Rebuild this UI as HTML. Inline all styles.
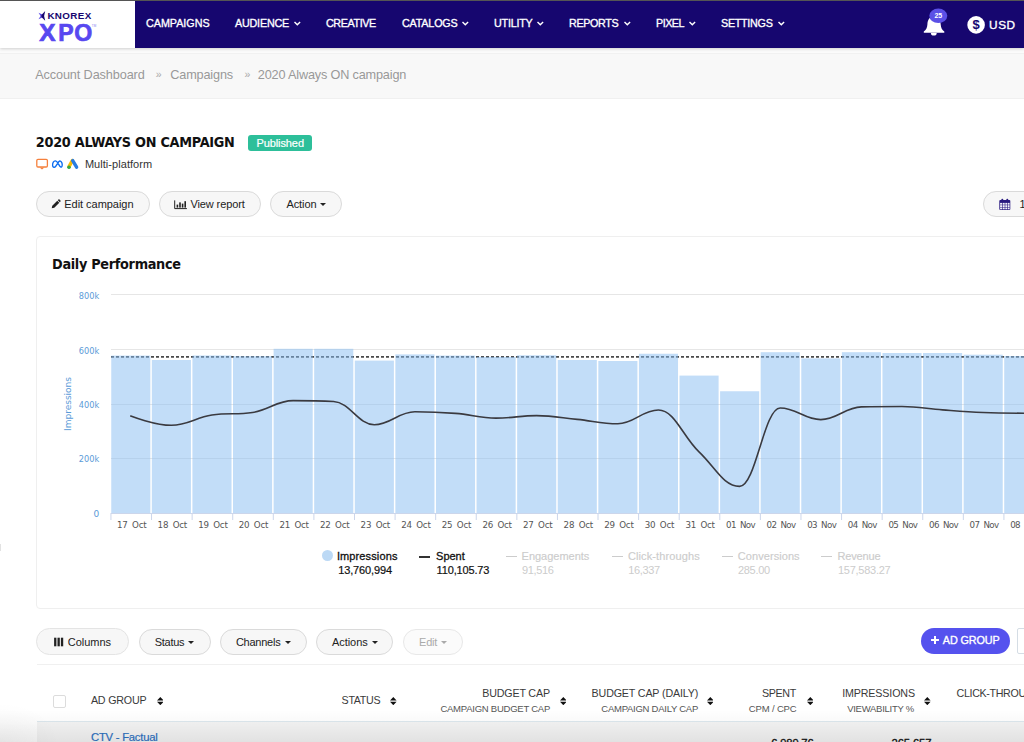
<!DOCTYPE html>
<html><head><meta charset="utf-8"><title>2020 Always ON campaign</title>
<style>
*{box-sizing:border-box;margin:0;padding:0}
html,body{width:1024px;height:742px;overflow:hidden;background:#fff;font-family:"Liberation Sans",sans-serif;color:#222}
.abs{position:absolute}
.t{position:absolute;white-space:pre}
#topline{left:0;top:0;width:1024px;height:1px;background:#555}
#nav{left:0;top:1px;width:1024px;height:46.5px;background:#16066f;box-shadow:0 1px 3px rgba(0,0,0,0.18)}
#logo{left:0;top:0;width:135px;height:46.5px;background:#fff}
#crumb{left:0;top:47.5px;width:1024px;height:51.5px;background:#f8f8f8;border-bottom:1px solid #f0f0f0}
.btn{position:absolute;border:1px solid #dadada;border-radius:14px;background:#f7f7f7}
.caret{position:absolute;width:0;height:0;border-left:3px solid transparent;border-right:3px solid transparent;border-top:3.2px solid #222}
.yl{font-family:"DejaVu Sans",sans-serif;font-size:9px;fill:#5b9bd8}
.xl{font-family:"DejaVu Sans",sans-serif;font-size:8.7px;fill:#555}
.lgl{position:absolute;height:2px;width:11.2px;background:#333;top:555.6px}
.lgl.off{background:#ccc;height:1.6px;top:555.8px}
.sort{position:absolute;width:6.6px;height:8.2px}
</style></head><body>

<!-- BREADCRUMB BG -->
<div class="abs" id="crumb"></div>
<div class="abs" style="left:0;top:47.5px;width:1024px;height:6.5px;background:#fbfbfb;border-bottom:1px solid #f1f1f1"></div>

<!-- NAV -->
<div class="abs" id="nav">
 <div class="abs" id="logo">
  <svg class="abs" style="left:36px;top:8px" width="64" height="36" viewBox="36 9 64 36">
   <path d="M38.5 12.7 L42.3 14.6 L41.2 16 L42.3 17.4 L38.5 19.3 L40.6 16 Z" fill="#5b4be8"/>
   <path d="M45.2 11.1 L41.9 14.4 L40.9 16 L41.9 17.6 L45.2 20.8 L44.1 16 Z" fill="#16066f"/>
   <text x="47.4" y="19.3" font-family="Liberation Sans, sans-serif" font-weight="bold" font-size="9.8" textLength="43.9" lengthAdjust="spacing" fill="#16066f">KNOREX</text>
   <g font-family="Liberation Sans, sans-serif" font-weight="bold" font-size="23.2" fill="#5848f0" stroke="#5848f0" stroke-width="0.7"><text x="39.2" y="41.1" textLength="16.3" lengthAdjust="spacingAndGlyphs">X</text><text x="58.2" y="41.1" textLength="15.4" lengthAdjust="spacingAndGlyphs">P</text><text x="74.2" y="41.1" textLength="18" lengthAdjust="spacingAndGlyphs">O</text></g>
   <text x="91.8" y="26.6" font-family="Liberation Sans, sans-serif" font-size="3" fill="#8a7ff0">TM</text>
  </svg>
 </div>
 
<svg class="abs" style="left:293.9px;top:19.8px" width="8" height="6" viewBox="0 0 8 6"><path d="M0.5 0.9 L3.3 3.8 L6.1 0.9" fill="none" stroke="#fff" stroke-width="1.4"/></svg>
<svg class="abs" style="left:462.1px;top:19.8px" width="8" height="6" viewBox="0 0 8 6"><path d="M0.5 0.9 L3.3 3.8 L6.1 0.9" fill="none" stroke="#fff" stroke-width="1.4"/></svg>
<svg class="abs" style="left:537.3px;top:19.8px" width="8" height="6" viewBox="0 0 8 6"><path d="M0.5 0.9 L3.3 3.8 L6.1 0.9" fill="none" stroke="#fff" stroke-width="1.4"/></svg>
<svg class="abs" style="left:623.6px;top:19.8px" width="8" height="6" viewBox="0 0 8 6"><path d="M0.5 0.9 L3.3 3.8 L6.1 0.9" fill="none" stroke="#fff" stroke-width="1.4"/></svg>
<svg class="abs" style="left:689.0px;top:19.8px" width="8" height="6" viewBox="0 0 8 6"><path d="M0.5 0.9 L3.3 3.8 L6.1 0.9" fill="none" stroke="#fff" stroke-width="1.4"/></svg>
<svg class="abs" style="left:777.9px;top:19.8px" width="8" height="6" viewBox="0 0 8 6"><path d="M0.5 0.9 L3.3 3.8 L6.1 0.9" fill="none" stroke="#fff" stroke-width="1.4"/></svg>
 <svg class="abs" style="left:920px;top:5px" width="32" height="34" viewBox="0 0 32 34">
  <path d="M14 10.5 C9.5 10.5 7.6 14 7.4 18.5 C7.2 22 6 23.8 3.8 25.4 L3.8 26.8 L24.3 26.8 L24.3 25.4 C22.1 23.8 20.9 22 20.7 18.5 C20.5 14 18.5 10.5 14 10.5 Z" fill="#fff"/>
  <path d="M10.9 27 A2.9 2.6 0 0 0 16.7 27 Z" fill="#fff"/>
  <ellipse cx="18.3" cy="9.8" rx="9" ry="7.3" fill="#5b50e6"/>
  <text x="18.3" y="12.3" text-anchor="middle" font-family="Liberation Sans, sans-serif" font-weight="bold" font-size="7" fill="#fff">25</text>
 </svg>
 <svg class="abs" style="left:966px;top:14px" width="20" height="20" viewBox="0 0 20 20">
  <circle cx="10.1" cy="9.9" r="8.8" fill="#fff"/>
  <text x="10.1" y="14.2" text-anchor="middle" font-family="Liberation Sans, sans-serif" font-weight="bold" font-size="13" fill="#16066f">$</text>
 </svg>
</div>
<div class="abs" id="topline"></div>

<!-- TITLE ROW -->
<div class="abs" id="pub" style="left:248.1px;top:135px;width:63.7px;height:15.6px;border-radius:3px;background:#2dbf9a"></div>
<svg class="abs" style="left:34px;top:156px" width="48" height="16" viewBox="34 156 48 16">
 <!-- display -->
 <rect x="36.8" y="159.4" width="10.6" height="7.6" rx="1.2" fill="none" stroke="#f5803c" stroke-width="1.3"/>
 <path d="M39.6 167.4 L44.4 167.4 L42 169.4 Z" fill="#f5803c"/>
 <!-- meta -->
 <path d="M52.6 165.6 C52.4 162.8 53.8 160.9 55.2 160.9 C57 160.9 58.2 163.6 59.4 165.6 C60.3 167.1 61 167.3 61.6 166.9 C62.5 166.2 62.4 163.6 61.5 162.2 C60.8 161 59.8 160.7 59 161.5 C57.8 162.7 56.6 165.3 55.6 166.5 C54.6 167.7 52.8 167.6 52.6 165.6 Z" fill="none" stroke="#0a6cf0" stroke-width="1.35" stroke-linejoin="round"/>
 <!-- google ads -->
 <path d="M72.3 160.6 L68.9 166.9" stroke="#fbbc04" stroke-width="3.4" stroke-linecap="round"/>
 <path d="M72.7 160.6 L76.6 167.2" stroke="#2a7de1" stroke-width="3.4" stroke-linecap="round"/>
 <circle cx="69" cy="167.2" r="1.8" fill="#2fa84f"/>
</svg>

<!-- BUTTONS ROW 1 -->
<div class="btn" style="left:36.2px;top:191px;width:113.4px;height:25.8px"></div>
<div class="btn" style="left:159.2px;top:191px;width:101.6px;height:25.8px"></div>
<div class="btn" style="left:270.2px;top:191px;width:72px;height:25.8px"></div>
<i class="caret" style="left:320.2px;top:203.2px"></i>
<div class="btn" style="left:983.2px;top:191px;width:80px;height:25.8px"></div>
<!-- pencil -->
<svg class="abs" style="left:51.2px;top:199.4px" width="10" height="10" viewBox="0 0 11 11">
 <path d="M0.8 10.2 L1.4 7.4 L6.9 1.9 L9.1 4.1 L3.6 9.6 Z M7.5 1.3 L8.2 0.6 C8.5 0.3 9 0.3 9.3 0.6 L10.4 1.7 C10.7 2 10.7 2.5 10.4 2.8 L9.7 3.5 Z" fill="#222"/>
</svg>
<!-- bar chart -->
<svg class="abs" style="left:174px;top:200px" width="14" height="10" viewBox="0 0 14 10">
 <path d="M0.7 0.4 V8.6 H12.9" fill="none" stroke="#222" stroke-width="1"/>
 <rect x="2.6" y="4.6" width="1.6" height="3" fill="#222"/>
 <rect x="5.2" y="2.4" width="1.6" height="5.2" fill="#222"/>
 <rect x="7.8" y="3.6" width="1.6" height="4" fill="#222"/>
 <rect x="10.4" y="1.2" width="1.6" height="6.4" fill="#222"/>
</svg>
<!-- calendar -->
<svg class="abs" style="left:999px;top:198px" width="12" height="13" viewBox="0 0 12 13">
 <rect x="0.3" y="2" width="11" height="10" rx="1" fill="#2a1a80"/>
 <rect x="2.4" y="0.8" width="1.8" height="3" rx="0.8" fill="#2a1a80"/>
 <rect x="7.4" y="0.8" width="1.8" height="3" rx="0.8" fill="#2a1a80"/>
 <g fill="#f4f3fb">
  <rect x="1.1" y="4.9" width="2.0" height="1.8"/>  <rect x="3.7" y="4.9" width="2.0" height="1.8"/>  <rect x="6.3" y="4.9" width="2.0" height="1.8"/>  <rect x="8.9" y="4.9" width="1.7" height="1.8"/>
  <rect x="1.1" y="7.2" width="2.0" height="1.8"/>  <rect x="3.7" y="7.2" width="2.0" height="1.8"/>  <rect x="6.3" y="7.2" width="2.0" height="1.8"/>  <rect x="8.9" y="7.2" width="1.7" height="1.8"/>
  <rect x="1.1" y="9.5" width="2.0" height="1.8"/>  <rect x="3.7" y="9.5" width="2.0" height="1.8"/>  <rect x="6.3" y="9.5" width="2.0" height="1.8"/>  <rect x="8.9" y="9.5" width="1.7" height="1.8"/>
 </g>
</svg>

<!-- CARD -->
<div class="abs" id="card" style="left:36px;top:236px;width:1010px;height:372.6px;border:1px solid #efefef;border-radius:4px;background:#fff"></div>
<svg class="abs" style="left:0;top:280px" width="1024" height="260" viewBox="0 280 1024 260">
<line x1="111" x2="1024" y1="294.5" y2="294.5" stroke="#e6e6e6"/>
<line x1="111" x2="1024" y1="349.5" y2="349.5" stroke="#e6e6e6"/>
<line x1="111" x2="1024" y1="404.5" y2="404.5" stroke="#e6e6e6"/>
<line x1="111" x2="1024" y1="458.5" y2="458.5" stroke="#e6e6e6"/>
<line x1="111" x2="1024" y1="356.9" y2="356.9" stroke="#4a4a4a" stroke-width="1.6" stroke-dasharray="3 2"/>
<rect x="111.25" y="355.60" width="39.09" height="157.40" fill="#86bcf1" fill-opacity="0.5"/>
<rect x="151.84" y="360.00" width="39.09" height="153.00" fill="#86bcf1" fill-opacity="0.5"/>
<rect x="192.43" y="355.50" width="39.09" height="157.50" fill="#86bcf1" fill-opacity="0.5"/>
<rect x="233.02" y="356.20" width="39.09" height="156.80" fill="#86bcf1" fill-opacity="0.5"/>
<rect x="273.61" y="348.80" width="39.09" height="164.20" fill="#86bcf1" fill-opacity="0.5"/>
<rect x="314.20" y="348.80" width="39.09" height="164.20" fill="#86bcf1" fill-opacity="0.5"/>
<rect x="354.79" y="360.60" width="39.09" height="152.40" fill="#86bcf1" fill-opacity="0.5"/>
<rect x="395.38" y="354.40" width="39.09" height="158.60" fill="#86bcf1" fill-opacity="0.5"/>
<rect x="435.97" y="355.60" width="39.09" height="157.40" fill="#86bcf1" fill-opacity="0.5"/>
<rect x="476.56" y="356.90" width="39.09" height="156.10" fill="#86bcf1" fill-opacity="0.5"/>
<rect x="517.15" y="355.30" width="39.09" height="157.70" fill="#86bcf1" fill-opacity="0.5"/>
<rect x="557.74" y="360.00" width="39.09" height="153.00" fill="#86bcf1" fill-opacity="0.5"/>
<rect x="598.33" y="361.00" width="39.09" height="152.00" fill="#86bcf1" fill-opacity="0.5"/>
<rect x="638.92" y="353.75" width="39.09" height="159.25" fill="#86bcf1" fill-opacity="0.5"/>
<rect x="679.51" y="375.60" width="39.09" height="137.40" fill="#86bcf1" fill-opacity="0.5"/>
<rect x="720.10" y="391.25" width="39.09" height="121.75" fill="#86bcf1" fill-opacity="0.5"/>
<rect x="760.69" y="352.20" width="39.09" height="160.80" fill="#86bcf1" fill-opacity="0.5"/>
<rect x="801.28" y="358.40" width="39.09" height="154.60" fill="#86bcf1" fill-opacity="0.5"/>
<rect x="841.87" y="352.20" width="39.09" height="160.80" fill="#86bcf1" fill-opacity="0.5"/>
<rect x="882.46" y="353.00" width="39.09" height="160.00" fill="#86bcf1" fill-opacity="0.5"/>
<rect x="923.05" y="353.00" width="39.09" height="160.00" fill="#86bcf1" fill-opacity="0.5"/>
<rect x="963.64" y="354.70" width="39.09" height="158.30" fill="#86bcf1" fill-opacity="0.5"/>
<rect x="1004.23" y="356.00" width="39.09" height="157.00" fill="#86bcf1" fill-opacity="0.5"/>
<line x1="111" x2="1024" y1="513.5" y2="513.5" stroke="#ccd6eb"/>
<line x1="110.95" x2="110.95" y1="513" y2="520" stroke="#ccd6eb"/>
<line x1="151.54" x2="151.54" y1="513" y2="520" stroke="#ccd6eb"/>
<line x1="192.13" x2="192.13" y1="513" y2="520" stroke="#ccd6eb"/>
<line x1="232.72" x2="232.72" y1="513" y2="520" stroke="#ccd6eb"/>
<line x1="273.31" x2="273.31" y1="513" y2="520" stroke="#ccd6eb"/>
<line x1="313.90" x2="313.90" y1="513" y2="520" stroke="#ccd6eb"/>
<line x1="354.49" x2="354.49" y1="513" y2="520" stroke="#ccd6eb"/>
<line x1="395.08" x2="395.08" y1="513" y2="520" stroke="#ccd6eb"/>
<line x1="435.67" x2="435.67" y1="513" y2="520" stroke="#ccd6eb"/>
<line x1="476.26" x2="476.26" y1="513" y2="520" stroke="#ccd6eb"/>
<line x1="516.85" x2="516.85" y1="513" y2="520" stroke="#ccd6eb"/>
<line x1="557.44" x2="557.44" y1="513" y2="520" stroke="#ccd6eb"/>
<line x1="598.03" x2="598.03" y1="513" y2="520" stroke="#ccd6eb"/>
<line x1="638.62" x2="638.62" y1="513" y2="520" stroke="#ccd6eb"/>
<line x1="679.21" x2="679.21" y1="513" y2="520" stroke="#ccd6eb"/>
<line x1="719.80" x2="719.80" y1="513" y2="520" stroke="#ccd6eb"/>
<line x1="760.39" x2="760.39" y1="513" y2="520" stroke="#ccd6eb"/>
<line x1="800.98" x2="800.98" y1="513" y2="520" stroke="#ccd6eb"/>
<line x1="841.57" x2="841.57" y1="513" y2="520" stroke="#ccd6eb"/>
<line x1="882.16" x2="882.16" y1="513" y2="520" stroke="#ccd6eb"/>
<line x1="922.75" x2="922.75" y1="513" y2="520" stroke="#ccd6eb"/>
<line x1="963.34" x2="963.34" y1="513" y2="520" stroke="#ccd6eb"/>
<line x1="1003.93" x2="1003.93" y1="513" y2="520" stroke="#ccd6eb"/>
<line x1="1044.52" x2="1044.52" y1="513" y2="520" stroke="#ccd6eb"/>
<path d="M 130.75 416.00 C 130.75 416.00 155.10 425.30 171.34 425.30 C 187.57 425.30 195.69 417.50 211.93 415.00 C 228.16 412.50 236.28 415.00 252.51 412.50 C 268.75 410.00 276.87 400.60 293.11 400.60 C 309.34 400.60 317.46 400.60 333.69 401.50 C 349.93 402.40 358.05 424.70 374.29 424.70 C 390.52 424.70 398.64 411.80 414.88 411.80 C 431.11 411.80 439.23 412.14 455.47 413.40 C 471.70 414.66 479.82 418.10 496.06 418.10 C 512.29 418.10 520.41 415.60 536.65 415.60 C 552.88 415.60 561.00 417.77 577.24 419.40 C 593.47 421.03 601.59 423.75 617.83 423.75 C 634.06 423.75 642.18 410.00 658.42 410.00 C 674.65 410.00 682.77 436.62 699.01 451.90 C 715.24 467.18 723.36 486.40 739.60 486.40 C 755.83 486.40 763.95 408.00 780.19 408.00 C 796.42 408.00 804.54 419.60 820.78 419.60 C 837.01 419.60 845.13 407.30 861.37 406.90 C 877.60 406.50 885.72 406.50 901.96 406.50 C 918.19 406.50 926.31 408.70 942.55 409.90 C 958.78 411.10 966.90 411.84 983.14 412.50 C 999.37 413.16 1023.73 413.20 1023.73 413.20" fill="none" stroke="#3a3a40" stroke-width="1.6" stroke-linejoin="round" stroke-linecap="round"/>
<text x="99.2" y="299.3" text-anchor="end" class="yl" textLength="20.4" lengthAdjust="spacingAndGlyphs">800k</text>
<text x="99.2" y="353.5" text-anchor="end" class="yl" textLength="20.4" lengthAdjust="spacingAndGlyphs">600k</text>
<text x="99.2" y="408.4" text-anchor="end" class="yl" textLength="20.4" lengthAdjust="spacingAndGlyphs">400k</text>
<text x="99.2" y="462.3" text-anchor="end" class="yl" textLength="20.4" lengthAdjust="spacingAndGlyphs">200k</text>
<text x="99.2" y="517.3" text-anchor="end" class="yl">0</text>
<text transform="translate(70.9,404) rotate(-90)" text-anchor="middle" class="yl" textLength="54" lengthAdjust="spacingAndGlyphs">Impressions</text>
<text x="131.8" y="528.1" text-anchor="middle" class="xl" textLength="29.6" lengthAdjust="spacing" word-spacing="2">17 Oct</text>
<text x="172.4" y="528.1" text-anchor="middle" class="xl" textLength="29.6" lengthAdjust="spacing" word-spacing="2">18 Oct</text>
<text x="213.0" y="528.1" text-anchor="middle" class="xl" textLength="29.6" lengthAdjust="spacing" word-spacing="2">19 Oct</text>
<text x="253.6" y="528.1" text-anchor="middle" class="xl" textLength="29.6" lengthAdjust="spacing" word-spacing="2">20 Oct</text>
<text x="294.2" y="528.1" text-anchor="middle" class="xl" textLength="29.6" lengthAdjust="spacing" word-spacing="2">21 Oct</text>
<text x="334.8" y="528.1" text-anchor="middle" class="xl" textLength="29.6" lengthAdjust="spacing" word-spacing="2">22 Oct</text>
<text x="375.4" y="528.1" text-anchor="middle" class="xl" textLength="29.6" lengthAdjust="spacing" word-spacing="2">23 Oct</text>
<text x="416.0" y="528.1" text-anchor="middle" class="xl" textLength="29.6" lengthAdjust="spacing" word-spacing="2">24 Oct</text>
<text x="456.6" y="528.1" text-anchor="middle" class="xl" textLength="29.6" lengthAdjust="spacing" word-spacing="2">25 Oct</text>
<text x="497.2" y="528.1" text-anchor="middle" class="xl" textLength="29.6" lengthAdjust="spacing" word-spacing="2">26 Oct</text>
<text x="537.8" y="528.1" text-anchor="middle" class="xl" textLength="29.6" lengthAdjust="spacing" word-spacing="2">27 Oct</text>
<text x="578.4" y="528.1" text-anchor="middle" class="xl" textLength="29.6" lengthAdjust="spacing" word-spacing="2">28 Oct</text>
<text x="619.0" y="528.1" text-anchor="middle" class="xl" textLength="29.6" lengthAdjust="spacing" word-spacing="2">29 Oct</text>
<text x="659.6" y="528.1" text-anchor="middle" class="xl" textLength="29.6" lengthAdjust="spacing" word-spacing="2">30 Oct</text>
<text x="700.2" y="528.1" text-anchor="middle" class="xl" textLength="29.6" lengthAdjust="spacing" word-spacing="2">31 Oct</text>
<text x="740.8" y="528.1" text-anchor="middle" class="xl" textLength="29.6" lengthAdjust="spacing" word-spacing="2">01 Nov</text>
<text x="781.4" y="528.1" text-anchor="middle" class="xl" textLength="29.6" lengthAdjust="spacing" word-spacing="2">02 Nov</text>
<text x="822.0" y="528.1" text-anchor="middle" class="xl" textLength="29.6" lengthAdjust="spacing" word-spacing="2">03 Nov</text>
<text x="862.6" y="528.1" text-anchor="middle" class="xl" textLength="29.6" lengthAdjust="spacing" word-spacing="2">04 Nov</text>
<text x="903.2" y="528.1" text-anchor="middle" class="xl" textLength="29.6" lengthAdjust="spacing" word-spacing="2">05 Nov</text>
<text x="943.8" y="528.1" text-anchor="middle" class="xl" textLength="29.6" lengthAdjust="spacing" word-spacing="2">06 Nov</text>
<text x="984.4" y="528.1" text-anchor="middle" class="xl" textLength="29.6" lengthAdjust="spacing" word-spacing="2">07 Nov</text>
<text x="1025.0" y="528.1" text-anchor="middle" class="xl" textLength="29.6" lengthAdjust="spacing" word-spacing="2">08 Nov</text>
</svg>

<!-- LEGEND -->
<div class="abs" style="left:322.1px;top:550px;width:11px;height:11px;border-radius:50%;background:#bcd9f5"></div>
<div class="lgl" style="left:419.3px"></div>
<div class="lgl off" style="left:505.7px"></div>
<div class="lgl off" style="left:611.7px"></div>
<div class="lgl off" style="left:721.6px"></div>
<div class="lgl off" style="left:821.2px"></div>

<!-- BUTTONS ROW 2 -->
<div class="btn" style="left:36.3px;top:628.2px;width:93px;height:27.2px;border-color:#e4e4e4"></div>
<div class="btn" style="left:138.5px;top:629px;width:72px;height:25.6px"></div>
<div class="btn" style="left:220px;top:629px;width:87px;height:25.6px"></div>
<div class="btn" style="left:316.2px;top:629px;width:77px;height:25.6px"></div>
<div class="btn" style="left:403.2px;top:629px;width:59.4px;height:25.6px;border-color:#e8e8e8;background:#fbfbfb"></div>
<i class="caret" style="left:188.4px;top:641.2px"></i>
<i class="caret" style="left:285px;top:641.2px"></i>
<i class="caret" style="left:371.6px;top:641.2px"></i>
<i class="caret" style="left:441px;top:641.2px;border-top-color:#aaa"></i>
<!-- columns icon -->
<svg class="abs" style="left:54px;top:637px" width="10" height="10" viewBox="0 0 10 10"><rect x="0.1" y="0.7" width="2.3" height="8.6" fill="#222"/><rect x="3.5" y="0.7" width="2.3" height="8.6" fill="#222"/><rect x="6.9" y="0.7" width="2.3" height="8.6" fill="#222"/></svg>
<!-- add group -->
<div class="abs" id="addg" style="left:921px;top:627.7px;width:88.8px;height:26px;border-radius:13px;background:#5552ee"></div>
<svg class="abs" style="left:930px;top:635px" width="10" height="10" viewBox="0 0 10 10"><path d="M5 1.1 V9 M1.05 5.05 H8.95" stroke="#fff" stroke-width="2" fill="none"/></svg>
<div class="abs" style="left:1017.4px;top:628.1px;width:30px;height:26.2px;border:1px solid #d5dde5;border-radius:2px;background:#fff"></div>

<!-- TABLE -->
<div class="abs" style="left:37px;top:664.3px;width:990px;height:1px;background:#f0f0f0"></div>
<div class="abs" style="left:53.4px;top:695.2px;width:12.4px;height:12.4px;border:1px solid #dcdcdc;border-radius:2px;background:#fff"></div>
<div class="abs" id="row" style="left:37px;top:721px;width:990px;height:30px;background:#f4f4f4;border-top:1.5px solid #dde8ee"></div>
<svg class="sort" style="left:156.6px;top:696.9px" viewBox="0 0 6.6 8.2"><path d="M0 3.4 L3.3 0 L6.6 3.4 Z M0 4.8 L3.3 8.2 L6.6 4.8 Z" fill="#111"/></svg>
<svg class="sort" style="left:390.1px;top:696.9px" viewBox="0 0 6.6 8.2"><path d="M0 3.4 L3.3 0 L6.6 3.4 Z M0 4.8 L3.3 8.2 L6.6 4.8 Z" fill="#111"/></svg>
<svg class="sort" style="left:559.7px;top:696.9px" viewBox="0 0 6.6 8.2"><path d="M0 3.4 L3.3 0 L6.6 3.4 Z M0 4.8 L3.3 8.2 L6.6 4.8 Z" fill="#111"/></svg>
<svg class="sort" style="left:706.9px;top:696.9px" viewBox="0 0 6.6 8.2"><path d="M0 3.4 L3.3 0 L6.6 3.4 Z M0 4.8 L3.3 8.2 L6.6 4.8 Z" fill="#111"/></svg>
<svg class="sort" style="left:806.9px;top:696.9px" viewBox="0 0 6.6 8.2"><path d="M0 3.4 L3.3 0 L6.6 3.4 Z M0 4.8 L3.3 8.2 L6.6 4.8 Z" fill="#111"/></svg>
<svg class="sort" style="left:924.1px;top:696.9px" viewBox="0 0 6.6 8.2"><path d="M0 3.4 L3.3 0 L6.6 3.4 Z M0 4.8 L3.3 8.2 L6.6 4.8 Z" fill="#111"/></svg>

<div class="abs" id="fade" style="left:0;top:710px;width:1024px;height:32px;background:linear-gradient(to bottom,rgba(0,0,0,0),rgba(0,0,0,0.025) 40%,rgba(0,0,0,0.075))"></div>
<div class="abs" id="fade2" style="left:0;top:702px;width:60px;height:40px;background:radial-gradient(ellipse at 0% 100%,rgba(0,0,0,0.035),rgba(0,0,0,0) 70%)"></div>

<div class="abs" style="left:0;top:544px;width:1.2px;height:7px;background:#e2e2e2"></div>
<span class="t" style='left:145.70px;top:14.70px;font:normal 11.7px/15px "Liberation Sans", sans-serif;color:#fff;letter-spacing:-0.016px;-webkit-text-stroke:0.35px #fff;transform:scaleX(0.920);transform-origin:0 0;'>CAMPAIGNS</span>
<span class="t" style='left:234.80px;top:14.70px;font:normal 11.7px/15px "Liberation Sans", sans-serif;color:#fff;letter-spacing:-0.210px;-webkit-text-stroke:0.35px #fff;transform:scaleX(0.920);transform-origin:0 0;'>AUDIENCE</span>
<span class="t" style='left:325.70px;top:14.70px;font:normal 11.7px/15px "Liberation Sans", sans-serif;color:#fff;letter-spacing:-0.429px;-webkit-text-stroke:0.35px #fff;transform:scaleX(0.920);transform-origin:0 0;'>CREATIVE</span>
<span class="t" style='left:401.50px;top:14.70px;font:normal 11.7px/15px "Liberation Sans", sans-serif;color:#fff;letter-spacing:-0.194px;-webkit-text-stroke:0.35px #fff;transform:scaleX(0.920);transform-origin:0 0;'>CATALOGS</span>
<span class="t" style='left:493.70px;top:14.70px;font:normal 11.7px/15px "Liberation Sans", sans-serif;color:#fff;letter-spacing:-0.238px;-webkit-text-stroke:0.35px #fff;transform:scaleX(0.920);transform-origin:0 0;'>UTILITY</span>
<span class="t" style='left:569.40px;top:14.70px;font:normal 11.7px/15px "Liberation Sans", sans-serif;color:#fff;letter-spacing:-0.393px;-webkit-text-stroke:0.35px #fff;transform:scaleX(0.920);transform-origin:0 0;'>REPORTS</span>
<span class="t" style='left:655.80px;top:14.70px;font:normal 11.7px/15px "Liberation Sans", sans-serif;color:#fff;letter-spacing:-0.528px;-webkit-text-stroke:0.35px #fff;transform:scaleX(0.920);transform-origin:0 0;'>PIXEL</span>
<span class="t" style='left:720.90px;top:14.70px;font:normal 11.7px/15px "Liberation Sans", sans-serif;color:#fff;letter-spacing:-0.304px;-webkit-text-stroke:0.35px #fff;transform:scaleX(0.920);transform-origin:0 0;'>SETTINGS</span>
<span class="t" style='left:989.10px;top:18.30px;font:normal 11.8px/15px "Liberation Sans", sans-serif;color:#fff;letter-spacing:0.556px;-webkit-text-stroke:0.35px #fff;'>USD</span>
<span class="t" style='left:35.20px;top:67.30px;font:normal 12.7px/17px "Liberation Sans", sans-serif;color:#999;letter-spacing:-0.118px;'>Account Dashboard</span>
<span class="t" style='left:155.70px;top:67.20px;font:normal 10.5px/14px "Liberation Sans", sans-serif;color:#aaa;'>»</span>
<span class="t" style='left:170.30px;top:67.30px;font:normal 12.7px/17px "Liberation Sans", sans-serif;color:#999;letter-spacing:-0.166px;'>Campaigns</span>
<span class="t" style='left:244.50px;top:67.20px;font:normal 10.5px/14px "Liberation Sans", sans-serif;color:#aaa;'>»</span>
<span class="t" style='left:257.80px;top:67.30px;font:normal 12.7px/17px "Liberation Sans", sans-serif;color:#999;letter-spacing:-0.172px;'>2020 Always ON campaign</span>
<span class="t" style='left:35.80px;top:133.30px;font:bold 14.3px/19px "DejaVu Sans Condensed", "DejaVu Sans", sans-serif;color:#111;letter-spacing:-0.271px;'>2020 ALWAYS ON CAMPAIGN</span>
<span class="t" style='left:256.40px;top:135.70px;font:normal 11px/14px "Liberation Sans", sans-serif;color:#fff;letter-spacing:-0.087px;-webkit-text-stroke:0.2px #fff;'>Published</span>
<span class="t" style='left:84.90px;top:156.50px;font:normal 11px/14px "Liberation Sans", sans-serif;color:#333;letter-spacing:0.049px;'>Multi-platform</span>
<span class="t" style='left:64.30px;top:197.00px;font:normal 11px/14px "Liberation Sans", sans-serif;color:#222;letter-spacing:-0.041px;'>Edit campaign</span>
<span class="t" style='left:190.40px;top:197.00px;font:normal 11px/14px "Liberation Sans", sans-serif;color:#222;letter-spacing:-0.098px;'>View report</span>
<span class="t" style='left:286.40px;top:197.00px;font:normal 11px/14px "Liberation Sans", sans-serif;color:#222;letter-spacing:-0.071px;'>Action</span>
<span class="t" style='left:1019.60px;top:197.00px;font:normal 11px/14px "Liberation Sans", sans-serif;color:#222;'>1</span>
<span class="t" style='left:52.00px;top:255.40px;font:bold 14.3px/19px "DejaVu Sans Condensed", "DejaVu Sans", sans-serif;color:#111;letter-spacing:-0.304px;'>Daily Performance</span>
<span class="t" style='left:336.90px;top:549.40px;font:normal 11px/14px "Liberation Sans", sans-serif;color:#111;letter-spacing:0.120px;-webkit-text-stroke:0.3px #111;'>Impressions</span>
<span class="t" style='left:338.20px;top:562.60px;font:normal 11px/14px "Liberation Sans", sans-serif;color:#111;letter-spacing:-0.126px;-webkit-text-stroke:0.2px #111;'>13,760,994</span>
<span class="t" style='left:436.10px;top:549.40px;font:normal 11px/14px "Liberation Sans", sans-serif;color:#111;letter-spacing:-0.022px;-webkit-text-stroke:0.3px #111;'>Spent</span>
<span class="t" style='left:436.60px;top:562.60px;font:normal 11px/14px "Liberation Sans", sans-serif;color:#111;letter-spacing:-0.158px;-webkit-text-stroke:0.2px #111;'>110,105.73</span>
<span class="t" style='left:521.60px;top:549.40px;font:normal 11px/14px "Liberation Sans", sans-serif;color:#ccc;letter-spacing:-0.018px;-webkit-text-stroke:0.15px #ccc;'>Engagements</span>
<span class="t" style='left:521.90px;top:562.60px;font:normal 11px/14px "Liberation Sans", sans-serif;color:#ccc;letter-spacing:-0.325px;'>91,516</span>
<span class="t" style='left:627.90px;top:549.40px;font:normal 11px/14px "Liberation Sans", sans-serif;color:#ccc;letter-spacing:0.115px;-webkit-text-stroke:0.15px #ccc;'>Click-throughs</span>
<span class="t" style='left:628.20px;top:562.60px;font:normal 11px/14px "Liberation Sans", sans-serif;color:#ccc;letter-spacing:-0.345px;'>16,337</span>
<span class="t" style='left:737.80px;top:549.40px;font:normal 11px/14px "Liberation Sans", sans-serif;color:#ccc;letter-spacing:0.066px;-webkit-text-stroke:0.15px #ccc;'>Conversions</span>
<span class="t" style='left:737.90px;top:562.60px;font:normal 11px/14px "Liberation Sans", sans-serif;color:#ccc;letter-spacing:-0.285px;'>285.00</span>
<span class="t" style='left:837.50px;top:549.40px;font:normal 11px/14px "Liberation Sans", sans-serif;color:#ccc;letter-spacing:-0.169px;-webkit-text-stroke:0.15px #ccc;'>Revenue</span>
<span class="t" style='left:838.00px;top:562.60px;font:normal 11px/14px "Liberation Sans", sans-serif;color:#ccc;letter-spacing:-0.260px;'>157,583.27</span>
<span class="t" style='left:67.70px;top:635.30px;font:normal 11px/14px "Liberation Sans", sans-serif;color:#222;'>Columns</span>
<span class="t" style='left:154.70px;top:635.30px;font:normal 11px/14px "Liberation Sans", sans-serif;color:#222;letter-spacing:-0.257px;'>Status</span>
<span class="t" style='left:235.90px;top:635.30px;font:normal 11px/14px "Liberation Sans", sans-serif;color:#222;letter-spacing:-0.239px;'>Channels</span>
<span class="t" style='left:332.10px;top:635.30px;font:normal 11px/14px "Liberation Sans", sans-serif;color:#222;letter-spacing:-0.079px;'>Actions</span>
<span class="t" style='left:419.10px;top:635.30px;font:normal 11px/14px "Liberation Sans", sans-serif;color:#aaa;letter-spacing:-0.233px;'>Edit</span>
<span class="t" style='left:942.80px;top:633.40px;font:normal 10.8px/14px "Liberation Sans", sans-serif;color:#fff;letter-spacing:-0.098px;-webkit-text-stroke:0.35px #fff;'>AD GROUP</span>
<span class="t" style='left:90.90px;top:693.30px;font:normal 10.7px/14px "Liberation Sans", sans-serif;color:#3a3a3a;letter-spacing:-0.183px;'>AD GROUP</span>
<span class="t" style='left:341.60px;top:693.30px;font:normal 10.7px/14px "Liberation Sans", sans-serif;color:#3a3a3a;letter-spacing:-0.309px;'>STATUS</span>
<span class="t" style='left:482.20px;top:685.60px;font:normal 10.7px/14px "Liberation Sans", sans-serif;color:#3a3a3a;letter-spacing:-0.161px;'>BUDGET CAP</span>
<span class="t" style='left:440.40px;top:703.10px;font:normal 9.5px/12px "Liberation Sans", sans-serif;color:#555;letter-spacing:-0.241px;'>CAMPAIGN BUDGET CAP</span>
<span class="t" style='left:591.60px;top:685.60px;font:normal 10.7px/14px "Liberation Sans", sans-serif;color:#3a3a3a;letter-spacing:-0.153px;'>BUDGET CAP (DAILY)</span>
<span class="t" style='left:601.30px;top:703.10px;font:normal 9.5px/12px "Liberation Sans", sans-serif;color:#555;letter-spacing:-0.259px;'>CAMPAIGN DAILY CAP</span>
<span class="t" style='left:761.90px;top:685.60px;font:normal 10.7px/14px "Liberation Sans", sans-serif;color:#3a3a3a;letter-spacing:-0.301px;'>SPENT</span>
<span class="t" style='left:748.80px;top:703.10px;font:normal 9.5px/12px "Liberation Sans", sans-serif;color:#555;letter-spacing:-0.153px;'>CPM / CPC</span>
<span class="t" style='left:842.20px;top:685.60px;font:normal 10.7px/14px "Liberation Sans", sans-serif;color:#3a3a3a;letter-spacing:-0.140px;'>IMPRESSIONS</span>
<span class="t" style='left:847.20px;top:703.10px;font:normal 9.5px/12px "Liberation Sans", sans-serif;color:#555;letter-spacing:-0.270px;'>VIEWABILITY %</span>
<span class="t" style='left:956.60px;top:685.60px;font:normal 10.7px/14px "Liberation Sans", sans-serif;color:#3a3a3a;letter-spacing:-0.351px;'>CLICK-THROUGHS</span>
<span class="t" style='left:91.00px;top:730.40px;font:normal 11.3px/15px "Liberation Sans", sans-serif;color:#2a6ab5;letter-spacing:-0.247px;-webkit-text-stroke:0.2px #2a6ab5;'>CTV - Factual</span>
<span class="t" style='left:771.30px;top:735.80px;font:normal 11.3px/15px "Liberation Sans", sans-serif;color:#111;letter-spacing:-0.227px;-webkit-text-stroke:0.3px #111;'>6,989.76</span>
<span class="t" style='left:891.60px;top:735.80px;font:normal 11.3px/15px "Liberation Sans", sans-serif;color:#111;letter-spacing:-0.159px;-webkit-text-stroke:0.3px #111;'>265,657</span>
</body></html>
